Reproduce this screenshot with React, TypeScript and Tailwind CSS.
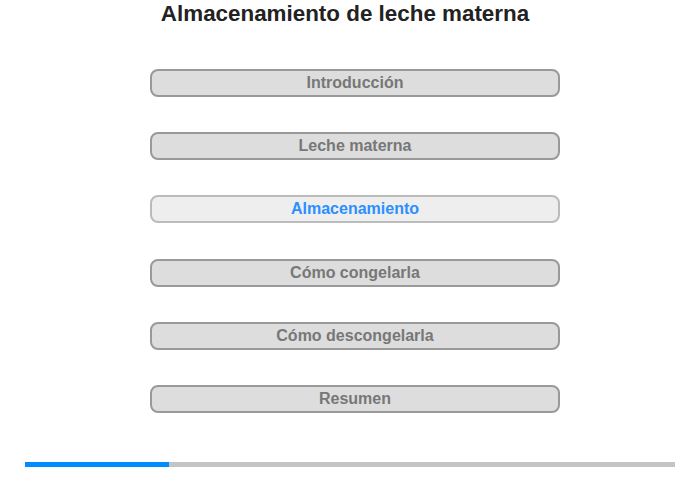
const sections = [
  { label: "Introducción", active: false },
  { label: "Leche materna", active: false },
  { label: "Almacenamiento", active: true },
  { label: "Cómo congelarla", active: false },
  { label: "Cómo descongelarla", active: false },
  { label: "Resumen", active: false },
];

export default function App() {
  return (
    <div className="h-[480px] w-[700px] bg-white font-['Liberation_Sans',Arial,sans-serif]">
      <h1 className="pr-[10px] pt-[1px] text-center text-[22.4px] font-bold leading-[26px] text-[#222]">
        Almacenamiento de leche materna
      </h1>
      <div className="mt-[42px] flex flex-col gap-[35.2px] pl-[150px]">
        {sections.map((s) => (
          <button
            key={s.label}
            className={`h-[28px] w-[410px] rounded-[8px] border-2 text-[16px] font-bold leading-none ${
              s.active
                ? "border-[#bbb] bg-[#eee] text-[#2b8fff]"
                : "border-[#999] bg-[#ddd] text-[#777]"
            }`}
          >
            {s.label}
          </button>
        ))}
      </div>
      <div className="ml-[25px] mt-[49px] flex h-[5px] w-[650px] bg-[#c4c4c4]">
        <div className="h-full w-[144px] bg-[#008cff]" />
      </div>
    </div>
  );
}
